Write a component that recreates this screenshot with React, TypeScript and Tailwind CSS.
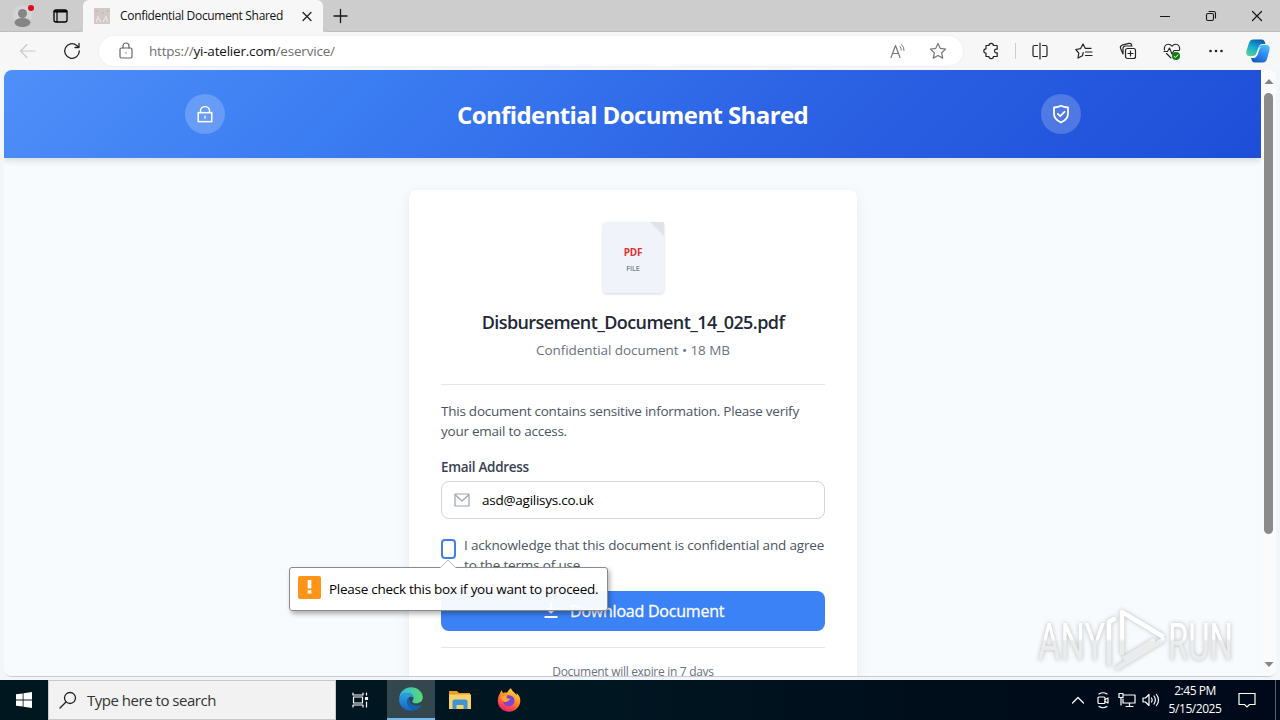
import type { ReactNode } from 'react';

type IconProps = { children: ReactNode; className?: string; box?: string };

function Icon({ children, className = 'size-5', box = '0 0 20 20' }: IconProps) {
  return (
    <svg viewBox={box} className={`shrink-0 ${className}`} fill="none" stroke="currentColor" strokeWidth="1.2" strokeLinecap="round" strokeLinejoin="round">
      {children}
    </svg>
  );
}

function TabStrip() {
  return (
    <div className="flex h-8 shrink-0 items-stretch bg-[#cdcdcd]">
      <div className="flex w-[83px] items-center rounded-br-md border-b border-[#bdbdbd] pl-3">
        <Icon className="h-7 w-6" box="0 0 24 28">
          <circle cx="10.500" cy="13" r="9.500" fill="#d5d5d5" stroke="none" />
          <circle cx="10.500" cy="11.500" r="4.500" fill="#858585" stroke="none" />
          <ellipse cx="10.500" cy="20.500" rx="8" ry="4.500" fill="#858585" stroke="none" />
          <circle cx="19" cy="6" r="3" fill="#e00b1c" stroke="none" />
        </Icon>
        <Icon className="ml-[14px] size-5 text-black">
          <rect x="4" y="4" width="13" height="12" rx="2" strokeWidth="1.300" />
          <path d="M4.500 5.500h12" strokeWidth="2" />
          <path d="M7 6v10" strokeWidth="1.200" />
        </Icon>
      </div>
      <div className="flex w-[240px] items-center rounded-t-md bg-[#f7f7f7] pl-[11px]">
        <svg viewBox="0 0 16 16" className="size-4">
          <rect width="16" height="16" fill="#d3c9c6" />
          <path d="M4 8v3M12 8v3M3 14a2 2 0 1 1 3 0M10 14a2 2 0 1 1 3 0" stroke="#f4efed" fill="none" />
          <path d="M1 3h3M7 5h3M12 3h3M7 11h2" stroke="#c0b3b0" fill="none" />
        </svg>
        <span className="ml-[10px] w-[172px] whitespace-nowrap text-[12px] tracking-[-0.32px] text-[#111]">Confidential Document Shared</span>
        <Icon className="ml-[7px] size-4 text-[#222]" box="0 0 16 16"><path d="M4 4.500l8 8M12 4.500l-8 8" strokeWidth="1.300" /></Icon>
      </div>
      <div className="flex flex-1 items-center rounded-bl-md border-b border-[#bdbdbd] pl-2 text-[#161616]">
        <Icon className="size-[18px]" box="0 0 18 18"><path d="M9.500 2.500v13M3 9h13" strokeWidth="1.300" /></Icon>
        <div className="ml-auto flex items-center gap-[30px] pr-[15px]">
          <Icon className="size-4" box="0 0 16 16"><path d="M3.500 8.500h9" strokeWidth="1.200" /></Icon>
          <Icon className="size-4" box="0 0 16 16">
            <rect x="3.500" y="5.500" width="7" height="7" rx="1.500" strokeWidth="1.100" />
            <path d="M6 3.500h4.500a2 2 0 0 1 2 2V10" strokeWidth="1.100" />
          </Icon>
          <Icon className="size-4" box="0 0 16 16"><path d="M3.500 3.500l9 9M12.500 3.500l-9 9" strokeWidth="1.200" /></Icon>
        </div>
      </div>
    </div>
  );
}

function Copilot() {
  return (
    <svg viewBox="0 0 26 26" className="size-[26px] shrink-0">
      <defs>
        <linearGradient id="cpA" x1="0.600" y1="0" x2="0.100" y2="1">
          <stop offset="0" stopColor="#0f5fb0" />
          <stop offset="0.450" stopColor="#15aad6" />
          <stop offset="1" stopColor="#5bd48c" />
        </linearGradient>
        <linearGradient id="cpB" x1="0.800" y1="0" x2="0.200" y2="1">
          <stop offset="0" stopColor="#4cc0f5" />
          <stop offset="0.500" stopColor="#2f86f0" />
          <stop offset="1" stopColor="#155bbd" />
        </linearGradient>
      </defs>
      <path d="M8 1.500h8.500c2.500 0 3.200 1.500 4 4.500h-3c-2 0-3 1-3.600 3L11.500 15c-.6 2-1.500 3-3.500 3H4.500c-3 0-3.800-2.500-2.800-6L3.800 5.500C4.600 2.800 6 1.500 8 1.500z" fill="url(#cpA)" />
      <path d="M18 24.500H10c-2.500 0-3.200-1.500-4-4.500h2.500c2 0 3-1 3.600-3L14 10c.6-2 1.700-3 3.500-3H21.500c3 0 3.800 2.500 2.800 6l-2.100 7.500c-.8 2.700-2.200 4-4.200 4z" fill="url(#cpB)" />
      <path d="M13.600 9.500h3.400c-1.800 0-2.600 1.200-3.100 3l-1 3.500c-.5 1.600-1.300 2.300-2.900 2.300H8.500c1.700 0 2.400-1.200 2.900-3z" fill="#f7f7f7" />
    </svg>
  );
}

function Toolbar() {
  return (
    <div className="flex h-[38px] shrink-0 items-center bg-[#f7f7f7] text-[#222]">
      <Icon className="ml-[18px] size-5 text-[#c9c9c9]"><path d="M17 10H2.500M9 3.500L2.500 10L9 16.500" /></Icon>
      <Icon className="ml-6 size-5"><path d="M17.300 10a7.300 7.300 0 1 1-2.600-5.600L16.800 6.500M17 2.500v4h-4" strokeWidth="1.300" /></Icon>
      <div className="ml-[17px] flex h-[30px] w-[864px] shrink-0 items-center rounded-full bg-white pl-[17px] text-[#666] shadow-[0_0_2px_rgba(0,0,0,0.08)]">
        <Icon>
          <rect x="4" y="7" width="12" height="10" rx="1.500" />
          <path d="M7 7V5a3 3 0 0 1 6 0v2" />
          <circle cx="10" cy="12" r=".7" fill="currentColor" stroke="none" />
        </Icon>
        <span className="ml-[13px] w-[200px] whitespace-nowrap text-[13.5px] tracking-[-0.2px] text-[#707070]">https://<span className="text-[#111]">yi-atelier.com</span>/eservice/</span>
        <Icon className="ml-auto size-5 text-[#777]">
          <path d="M3 16.500L7.500 4.500L12 16.500M4.600 12.500h5.800" />
          <path d="M12 5.500q1.500 1.500 1.300 3.500M13.500 3.500q3 2.500 2.500 6" strokeWidth="1" />
        </Icon>
        <Icon className="mr-[15px] ml-5 size-5 text-[#777]"><path d="M10 2.500l2.300 4.900 5.300.7-3.900 3.700 1 5.300L10 14.500l-4.700 2.600 1-5.300L2.400 8.100l5.300-.7z" /></Icon>
      </div>
      <Icon className="ml-[18px] size-5">
        <path d="M5 4.500h3a2.200 2.200 0 0 1 4.400 0h3.800v3.700h-.9a1.800 1.800 0 0 0 0 3.600h.9v3.700h-3.800a2.200 2.200 0 0 1-4.400 0H5v-3.300a2.200 2.200 0 0 1 0-4.400z" />
      </Icon>
      <div className="ml-[14px] h-4 w-px bg-[#ccc]" />
      <Icon className="ml-[14px] size-5">
        <path d="M10 2v16M7.500 4.500h-3a1.500 1.500 0 0 0-1.500 1.500v8a1.500 1.500 0 0 0 1.500 1.500h3M12.500 4.500h3a1.500 1.500 0 0 1 1.500 1.500v8a1.500 1.500 0 0 1-1.500 1.500h-3" />
      </Icon>
      <Icon className="ml-6 size-5">
        <path d="M8 15l-4 2 .8-4.900L1.800 8.500l4.700-.8L9 3l2.200 4.300H17M11.500 11H18M11.500 14.500H18M8.500 14.700l.7-3.200" />
      </Icon>
      <Icon className="ml-6 size-5">
        <rect x="7.500" y="7.500" width="10" height="10" rx="2" />
        <path d="M12.500 10v5M10 12.500h5M5 13L2.600 7.500C2 5.800 2.300 4.800 4 4.200l7-1.800c1.500-.3 2.300.3 2.700 1.800M5 13V7.500a2.500 2.500 0 0 1 2.500-2.500h6.500" />
      </Icon>
      <Icon className="ml-6 size-5">
        <path d="M2.500 9C1.800 6 3.500 3.300 6.200 3.300c1.600 0 2.900.7 3.800 2 .9-1.300 2.200-2 3.800-2C16.500 3.300 18.200 6 17.500 9M2 10.500h3.500l2-3.500 2.500 6 2-3.500h5M4.500 12.500l4.500 4.500" strokeWidth="1.100" />
        <circle cx="14" cy="15" r="4" fill="#0f7b10" stroke="none" />
        <path d="M12.200 15.500l1.200 1 2.500-2.700" stroke="#fff" strokeWidth="1" />
      </Icon>
      <Icon className="ml-6 size-5">
        <g fill="currentColor" stroke="none"><circle cx="4.500" cy="10" r="1.300" /><circle cx="10" cy="10" r="1.300" /><circle cx="15.500" cy="10" r="1.300" /></g>
      </Icon>
      <div className="ml-[19px]"><Copilot /></div>
    </div>
  );
}

function PageHeader() {
  return (
    <header className="relative flex h-[88px] shrink-0 items-center bg-[linear-gradient(135deg,#4f8ff9_0%,#3b7df2_28%,#2c62e4_62%,#1d4ed8_100%)] pl-[181px] shadow-[0_3px_6px_rgba(0,0,0,0.12)]">
      <div className="flex size-10 items-center justify-center rounded-full bg-white/20 text-white">
        <Icon className="size-[18px]"><rect x="2.500" y="8.500" width="15" height="10" strokeWidth="1.700" strokeLinejoin="miter" /><path d="M5 8.500V6.500a5 4.700 0 0 1 10 0V8.500M10 12.500v2" strokeWidth="1.600" /></Icon>
      </div>
      <h1 className="ml-[232px] w-[352px] whitespace-nowrap pt-0.5 text-[24px] font-bold leading-8 tracking-[-0.61px] text-white">Confidential Document Shared</h1>
      <div className="ml-[232px] flex size-10 items-center justify-center rounded-full bg-white/20 text-white">
        <Icon><path d="M10 1.800c2 1.200 4.500 1.600 7 1.700v6c0 4-2.500 7-7 9-4.500-2-7-5-7-9v-6c2.500-.1 5-.5 7-1.700zM6.800 9.800l2.400 2.400 4.300-4.400" strokeWidth="1.800" /></Icon>
      </div>
    </header>
  );
}

function PdfBadge() {
  return (
    <div className="relative flex h-[71px] w-[61px] flex-col items-center rounded-[4px] bg-[#f0f4fa] pt-[23px] shadow-[0_1px_3px_rgba(0,0,0,0.16)]">
      <svg viewBox="0 0 14 14" className="absolute top-0 right-0 size-[14px]"><path d="M0 0h14v14z" fill="#dfe4ea" /></svg>
      <span className="text-[10px] font-bold leading-[14px] tracking-[-0.3px] text-[#e03131]">PDF</span>
      <span className="mt-[4px] text-[7.5px] leading-[10px] tracking-[-0.1px] text-[#475569]">FILE</span>
    </div>
  );
}

function ValidationTip() {
  return (
    <div className="absolute top-[497px] left-[285px] flex h-[44px] w-[319px] items-center rounded-[3px] border border-[#8b8b8b] bg-white/[0.94] pl-[8px] shadow-[2px_3px_5px_rgba(0,0,0,0.3)]">
      <svg viewBox="0 0 18 9" className="absolute -top-[9px] left-[149px] h-[9px] w-[18px]">
        <path d="M1 9L9 1L17 9" fill="#fff" stroke="#bbb" />
      </svg>
      <div className="mb-1 flex size-[23px] items-center justify-center rounded-[2px] bg-[#ff9416]">
        <svg viewBox="0 0 5 15" className="h-[14px] w-[5px]"><path d="M.5 0h4v9h-4zM.5 11h4v3.500h-4z" fill="#fff" /></svg>
      </div>
      <span className="ml-2 whitespace-nowrap text-[13.5px] tracking-[-0.27px] text-black">Please check this box if you want to proceed.</span>
    </div>
  );
}

function Card() {
  return (
    <main className="mt-8 ml-[405px] flex w-[448px] shrink-0 flex-col rounded-lg bg-white px-8 pt-8 pb-8 shadow-[0_3px_14px_rgba(0,0,0,0.07)]">
      <div className="flex justify-center"><PdfBadge /></div>
      <h2 className="mt-[15px] whitespace-nowrap text-center text-[18px] font-semibold leading-7 tracking-[-0.59px] text-[#1f2937]">Disbursement_Document_14_025.pdf</h2>
      <p className="mt-[4px] whitespace-nowrap text-center text-[13.5px] leading-5 tracking-[-0.07px] text-[#6b7280]">Confidential document • 18 MB</p>
      <hr className="mt-6 border-[#e5e7eb]" />
      <p className="mt-4 whitespace-nowrap text-[13.5px] leading-5 tracking-[-0.24px] text-[#4b5563]">This document contains sensitive information. Please verify<br />your email to access.</p>
      <label className="mt-4 text-[13.5px] font-semibold leading-5 tracking-[-0.3px] text-[#374151]">Email Address</label>
      <div className="mt-1 flex h-[38px] items-center rounded-lg border border-[#d1d5db] pl-[12px]">
        <Icon className="size-4 text-[#9ca3af]" box="0 0 16 16"><rect x="1" y="2" width="14" height="12" /><path d="M1.500 3L8 9l6.500-6" /></Icon>
        <span className="ml-[12px] text-[13.5px] tracking-[-0.25px] text-black">asd@agilisys.co.uk</span>
      </div>
      <div className="mt-4 flex h-10">
        <div className="mt-1 h-5 w-[15px] shrink-0 rounded-[4px] border-2 border-[#4380e5] bg-white" />
        <p className="ml-2 whitespace-nowrap text-[13.5px] leading-5 tracking-[-0.17px] text-[#4b5563]">I acknowledge that this document is confidential and agree<br />to the terms of use</p>
      </div>
      <div className="mt-4 flex h-10 items-center rounded-lg bg-[#3b82f6] pl-[102px] text-white">
        <Icon className="size-4" box="0 0 16 16"><path d="M8 1v8M5 6.500l3 3 3-3" strokeWidth="2" /><path d="M1.500 14h13" strokeWidth="2" strokeLinecap="butt" /></Icon>
        <span className="ml-[11px] whitespace-nowrap text-[16px] font-medium tracking-[-0.22px] [-webkit-text-stroke:0.3px_#fff]">Download Document</span>
      </div>
      <hr className="mt-4 border-[#e5e7eb]" />
      <p className="mt-4 whitespace-nowrap text-center text-[12px] leading-4 tracking-[-0.3px] text-[#6b7280]">Document will expire in 7 days</p>
    </main>
  );
}

function Watermark() {
  return (
    <svg viewBox="0 0 210 70" className="absolute top-[535px] left-[1026px] h-[70px] w-[210px] drop-shadow-[0_0_2px_rgba(0,0,0,0.26)]">
      <defs>
        <linearGradient id="wmA" gradientUnits="userSpaceOnUse" x1="0" y1="0" x2="0" y2="70">
          <stop offset="0" stopColor="#fff" />
          <stop offset="0.480" stopColor="#fff" />
          <stop offset="0.520" stopColor="#ebecec" />
          <stop offset="1" stopColor="#e9eaea" />
        </linearGradient>
      </defs>
      <g fill="url(#wmA)" className="font-['Roboto',sans-serif]">
        <text x="8" y="55" fontSize="51" textLength="67" lengthAdjust="spacingAndGlyphs">ANY</text>
        <text x="138" y="55" fontSize="51" textLength="65" lengthAdjust="spacingAndGlyphs">RUN</text>
      </g>
      <path d="M79 59V17l5-3M92 48V7l40 24M95 53l28-17M87 63l46-28" fill="none" stroke="url(#wmA)" strokeWidth="4.5" strokeLinejoin="round" strokeLinecap="round" />
    </svg>
  );
}

function PageView() {
  return (
    <div className="relative mx-[4px] flex h-[607px] shrink-0 overflow-hidden rounded-[8px] border-b border-[#c9cccf] bg-white">
      <div className="flex w-[1257px] flex-col overflow-hidden bg-[#f8fbfd]">
        <PageHeader />
        <Card />
      </div>
      <div className="flex w-[15px] flex-col items-center bg-[#fbfbfb] pt-[8px] pb-[8px]">
        <svg viewBox="0 0 10 7" className="h-[7px] w-[10px]"><path d="M5 1l4.500 5h-9z" fill="#858585" /></svg>
        <div className="mt-[8px] h-[441px] w-[9px] rounded-full bg-[#8b8b8b]" />
        <svg viewBox="0 0 10 7" className="mt-auto h-[7px] w-[10px]"><path d="M5 6l4.500-5h-9z" fill="#858585" /></svg>
      </div>
      <ValidationTip />
      <Watermark />
    </div>
  );
}

function EdgeLogo() {
  return (
    <svg viewBox="0 0 24 24" className="size-6">
      <defs>
        <linearGradient id="edA" x1="0" y1="0.300" x2="1" y2="0.300"><stop offset="0" stopColor="#2cb5ea" /><stop offset="1" stopColor="#5bdc6c" /></linearGradient>
        <linearGradient id="edB" x1="0" y1="0" x2="0" y2="1"><stop offset="0" stopColor="#2aa5e5" /><stop offset="1" stopColor="#1664c0" /></linearGradient>
      </defs>
      <path d="M.2 11C1 4.500 6 .3 12 .3c7 0 11.800 5 11.800 10 0 3.700-2.800 6-6.300 6-2.800 0-4.500-1.200-4.200-2.400.9-.8 1.300-1.800 1.200-3C14.300 8 11.500 6 8 6 4.500 6 1.700 8 .2 11z" fill="url(#edA)" />
      <path d="M.1 12.500C.5 9 3.800 6 8 6c3.600 0 6.500 2.300 6.500 5-1-1-2.500-1.500-3.800-1-2 1-3 3.500-2.200 6.500 1 3.500 4.500 6.200 7 6.700-1 .4-2.300.6-3.500.6C5.500 23.800 0 18.500.1 12.500z" fill="url(#edB)" />
      <path d="M9.500 10.700c-1.400 1.500-1.900 3.600-1 6 1.400 4 5.200 6.500 7.700 6.300 2.600-.7 4.800-2.400 6-4.600.3-.6-.2-.9-.6-.6-5 2.600-11-.2-12.100-7.100z" fill="#1461b4" />
    </svg>
  );
}

function Firefox() {
  return (
    <svg viewBox="0 0 24 24" className="size-6">
      <defs>
        <linearGradient id="ffA" x1="0.800" y1="0" x2="0.300" y2="1"><stop offset="0" stopColor="#ffe84a" /><stop offset="0.400" stopColor="#ff9a28" /><stop offset="0.750" stopColor="#ff4b45" /><stop offset="1" stopColor="#e62278" /></linearGradient>
      </defs>
      <path d="M3 5.500C3.500 4 4 3 5 2.300c0 1.300.4 2 1.200 2.700C7.500 4.500 9 4.500 10 4.800 11 3 12.500 1 14 .2c.5 2 2 3 3.500 4.500 1 .9 1.500 1.800 1.900 2.700.3-.6.3-1.500 0-2.300C22 7 23.500 10 23.300 13 23 19 18 23.700 12 23.700S.8 19 .8 13C.8 10 1.500 7.500 3 5.500z" fill="url(#ffA)" />
      <path d="M10 7.500c4-.8 7.500 1.500 7.500 5.200 0 3.300-2.600 5.500-5.500 5.500-3.300 0-5.700-2.400-5.700-5 2 1.300 3.800.8 4.700-.3 1.300-.7 2-1 2-1.700-.2-.6-1.800-.3-2.600-.8-.7-.5-1-1.900-.4-2.900z" fill="#7a45d5" />
      <path d="M3.500 9.500C5 7.500 8 7 10 7.700c-1 .8-.8 2 0 2.800.8.5 2.500.2 2.700.8 0 .7-1 1.200-2.200 1.800C9 14.500 7 14 5.800 13z" fill="#ffa52e" />
    </svg>
  );
}

function Taskbar() {
  return (
    <div className="flex h-10 shrink-0 items-stretch bg-[linear-gradient(90deg,#001720_0%,#001722_45%,#000d1b_75%,#000919_100%)] text-white">
      <div className="flex w-12 items-center justify-center">
        <svg viewBox="0 0 16 16" className="size-4"><path d="M0 2.300L6.700 1.400V7.600H0zM7.500 1.300L16 0v7.600H7.500zM0 8.400h6.700v6.200L0 13.700zM7.500 8.400H16V16l-8.500-1.200z" fill="#fff" /></svg>
      </div>
      <div className="flex w-[288px] items-center border border-[#c9c9c9] bg-[#f2f2f2] pl-[10px] text-[#222]">
        <Icon className="size-[18px]" box="0 0 18 18"><circle cx="11" cy="7" r="5.500" strokeWidth="1.300" /><path d="M7 11L1 17" strokeWidth="1.400" /></Icon>
        <span className="ml-[10px] whitespace-nowrap text-[15px] tracking-[-0.48px] text-[#333]">Type here to search</span>
      </div>
      <div className="flex w-[51px] items-center justify-center pr-1">
        <Icon className="size-[18px]" box="0 0 18 18"><path d="M2 2v2h10V2M2 16v-2h10v2M2.500 6h9v6h-9zM15.500 2v2M15.500 11v5" /><path d="M14.500 6.500h2v2h-2z" fill="#fff" /></Icon>
      </div>
      <div className="flex w-12 items-center justify-center border-b-2 border-[#76b9ed] bg-[#34474f]"><EdgeLogo /></div>
      <div className="flex w-[49px] items-center justify-center">
        <svg viewBox="0 0 22 20" className="h-5 w-[22px]">
          <path d="M0 1h8l2 2h11v4H0z" fill="#e6a11c" />
          <path d="M0 4.500h22V19H0z" fill="#f8d36c" />
          <path d="M3.500 19v-7.500a2 2 0 0 1 2-2h11a2 2 0 0 1 2 2V19h-4v-4h-7v4z" fill="#3f94d1" />
        </svg>
      </div>
      <div className="flex w-[49px] items-center justify-center"><Firefox /></div>
      <div className="ml-auto flex items-center">
        <Icon className="size-[14px]" box="0 0 14 14"><path d="M1.500 10L7 4.500l5.500 5.500" /></Icon>
        <Icon className="ml-[9px] size-[18px]" box="0 0 18 18"><rect x="4" y="6" width="7" height="6.500" rx="1" /><path d="M11 8.500l3-1.500v5l-3-1.500M5 3q4-2.500 8 0M5 15.500q4 2.500 8 0" /></Icon>
        <Icon className="ml-[6px] size-[18px]" box="0 0 18 18"><path d="M6 4h11v8H5V8M1 2.500h4v4H1zM3 6.500V14M8 15.500h7M11.500 12v3" /></Icon>
        <Icon className="ml-[6px] size-[18px]" box="0 0 18 18"><path d="M1 7h2.500L7 3.500v11L3.500 11H1zM9.500 7q1.300 2 0 4M12 5q2.700 4 0 8M14.500 3.500q4 5.500 0 11" /></Icon>
        <div className="ml-[9px] flex w-[52px] flex-col items-center whitespace-nowrap text-[12px] leading-[18px] tracking-[-0.45px]">
          <span>2:45 PM</span>
          <span>5/15/2025</span>
        </div>
        <Icon className="ml-[17px] size-[18px]" box="0 0 18 18"><path d="M1 2.500h16v11h-5.500L9 16l-2.500-2.500H1z" strokeLinejoin="miter" /></Icon>
        <div className="ml-[19px] h-10 w-[5px] border-l border-[#5c6370]" />
      </div>
    </div>
  );
}

export default function App() {
  return (
    <div className="flex h-[720px] w-[1280px] flex-col overflow-hidden bg-[#f3f6f8] font-['Open_Sans','Noto_Sans',sans-serif]">
      <TabStrip />
      <Toolbar />
      <PageView />
      <div className="h-[3px] shrink-0" />
      <Taskbar />
    </div>
  );
}
